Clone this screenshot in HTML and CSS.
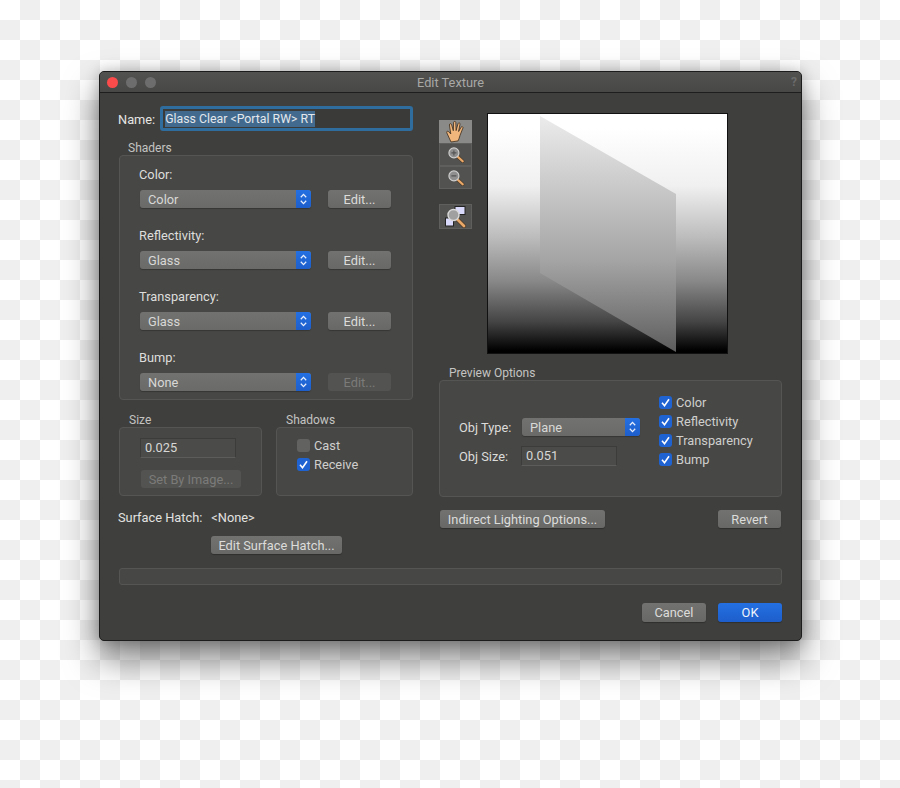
FILE: index.html
```html
<!DOCTYPE html>
<html lang="en">
<head>
  <meta charset="UTF-8" />
  <title>Edit Texture</title>
  <link rel="stylesheet" href="styles.css">
</head>
<body>
  <svg class="defs" width="0" height="0">
    <symbol id="updown" viewBox="0 0 15 18">
      <path d="M4.8 7.2 7.5 4.4l2.7 2.8M4.8 10.8l2.7 2.8 2.7-2.8" fill="none" stroke="#e8eefc" stroke-width="1.3"/>
    </symbol>
    <symbol id="tick" viewBox="0 0 13 13">
      <path d="M3 6.8 5.5 9.7 10 3.2" fill="none" stroke="#fff" stroke-width="1.6"/>
    </symbol>
    <symbol id="glass" viewBox="0 0 24 24">
      <path d="M13.500 13.500 20 19.500" stroke="#4a3a2a" stroke-width="4.200" stroke-linecap="round"/>
      <path d="M13.500 13.500 20 19.500" stroke="#e9a768" stroke-width="2.800" stroke-linecap="round"/>
      <circle cx="9.500" cy="9.500" r="6" fill="#8f8f8f" stroke="#cfcfcf" stroke-width="1.400"/>
    </symbol>
  </svg>

  <div class="window">
    <div class="titlebar">
      <div class="lights"><i class="red"></i><i></i><i></i></div>
      <div class="title">Edit Texture</div>
      <div class="help">?</div>
    </div>

    <div class="content">
      <div class="main">
        <div class="left">
          <div class="name-row">
            <span>Name:</span>
            <div class="name-input"><span class="selected">Glass Clear &lt;Portal RW&gt; RT</span></div>
          </div>

          <div class="legend">Shaders</div>
          <div class="group shaders">
            <div class="shader">
              <div class="shader-label">Color:</div>
              <div class="shader-row">
                <div class="select"><span>Color</span><b><svg width="15" height="18"><use href="#updown"/></svg></b></div>
                <div class="btn edit">Edit...</div>
              </div>
            </div>
            <div class="shader">
              <div class="shader-label">Reflectivity:</div>
              <div class="shader-row">
                <div class="select"><span>Glass</span><b><svg width="15" height="18"><use href="#updown"/></svg></b></div>
                <div class="btn edit">Edit...</div>
              </div>
            </div>
            <div class="shader">
              <div class="shader-label">Transparency:</div>
              <div class="shader-row">
                <div class="select"><span>Glass</span><b><svg width="15" height="18"><use href="#updown"/></svg></b></div>
                <div class="btn edit">Edit...</div>
              </div>
            </div>
            <div class="shader">
              <div class="shader-label">Bump:</div>
              <div class="shader-row">
                <div class="select"><span>None</span><b><svg width="15" height="18"><use href="#updown"/></svg></b></div>
                <div class="btn edit disabled">Edit...</div>
              </div>
            </div>
          </div>

          <div class="pair">
            <div class="size-col">
              <div class="legend">Size</div>
              <div class="group size-box">
                <div class="field size-field">0.025</div>
                <div class="btn disabled image-btn">Set By Image...</div>
              </div>
            </div>
            <div class="shadow-col">
              <div class="legend">Shadows</div>
              <div class="group shadow-box">
                <div class="check"><i class="off"></i>Cast</div>
                <div class="check"><i><svg width="13" height="13"><use href="#tick"/></svg></i>Receive</div>
              </div>
            </div>
          </div>

          <div class="hatch-row"><span>Surface Hatch:</span><span>&lt;None&gt;</span></div>
          <div class="btn hatch-btn">Edit Surface Hatch...</div>
        </div>

        <div class="right">
          <div class="preview-row">
            <div class="tools">
              <div class="tool active">
                <svg width="24" height="24" viewBox="0 0 24 24">
                  <path d="M7 22 2.800 12.800c-.6-1.400 1-2.200 1.900-1.100l2.100 2.300L5.400 5c-.2-1.500 1.800-1.800 2.200-.3l1.700 6L9.600 2.500c.1-1.500 2.100-1.500 2.200 0l.3 8.100 1.900-6.900c.4-1.400 2.300-1 2 .5l-1.400 7.300 2.500-4.300c.7-1.200 2.400-.4 1.800.9l-2.900 7.300c-.5 1.700-1 4-1.900 5.500z" fill="#f0b67c" stroke="#3c2c1c" stroke-width=".8"/>
                </svg>
              </div>
              <div class="tool">
                <svg width="20" height="20"><use href="#glass"/><path d="M5.400 7.900h5M7.900 5.400v5" stroke="#555" stroke-width="1.200"/></svg>
              </div>
              <div class="tool">
                <svg width="20" height="20"><use href="#glass"/><path d="M5.400 7.900h5" stroke="#555" stroke-width="1.200"/></svg>
              </div>
              <div class="tool fit">
                <svg width="24" height="24" viewBox="0 0 24 24">
                  <rect x="11" y="1.500" width="10" height="8" fill="#d9d9fb" stroke="#222"/>
                  <rect x="1.500" y="13" width="8" height="8" fill="#d9d9fb" stroke="#222"/>
                  <path d="M13 14 20 21" stroke="#4a3a2a" stroke-width="4.200" stroke-linecap="round"/>
                  <path d="M13 14 20 21" stroke="#e9a768" stroke-width="2.800" stroke-linecap="round"/>
                  <circle cx="9.500" cy="10" r="5.500" fill="#a0a0a0" stroke="#d8d8d8" stroke-width="1.400"/>
                </svg>
              </div>
            </div>
            <div class="preview">
              <svg width="239" height="239" viewBox="0 0 239 239">
                <defs>
                  <linearGradient id="plane" x1="0" y1="0" x2="0" y2="1">
                    <stop offset="0" stop-color="#ececec"/>
                    <stop offset=".61" stop-color="#a5a5a5"/>
                    <stop offset=".9" stop-color="#707070"/>
                    <stop offset="1" stop-color="#5c5c5c"/>
                  </linearGradient>
                </defs>
                <polygon points="52,2 188,80 188,238 52,159" fill="url(#plane)"/>
              </svg>
            </div>
          </div>

          <div class="legend options-legend">Preview Options</div>
          <div class="group options">
            <div class="obj">
              <div class="obj-row">
                <span class="obj-label">Obj Type:</span>
                <div class="select obj-select"><span>Plane</span><b><svg width="15" height="18"><use href="#updown"/></svg></b></div>
              </div>
              <div class="obj-row">
                <span class="obj-label">Obj Size:</span>
                <div class="field obj-field">0.051</div>
              </div>
            </div>
            <div class="checks">
              <div class="check"><i><svg width="13" height="13"><use href="#tick"/></svg></i>Color</div>
              <div class="check"><i><svg width="13" height="13"><use href="#tick"/></svg></i>Reflectivity</div>
              <div class="check"><i><svg width="13" height="13"><use href="#tick"/></svg></i>Transparency</div>
              <div class="check"><i><svg width="13" height="13"><use href="#tick"/></svg></i>Bump</div>
            </div>
          </div>

          <div class="right-btns">
            <div class="btn indirect">Indirect Lighting Options...</div>
            <div class="btn revert">Revert</div>
          </div>
        </div>
      </div>

      <div class="status"></div>

      <div class="footer">
        <div class="btn wide">Cancel</div>
        <div class="btn wide primary">OK</div>
      </div>
    </div>
  </div>
</body>
</html>
```

FILE: styles.css
```css
html, body {
  height: 100%;
}
body {
  margin: 0;
  padding: 71px 0 0 99px;
  box-sizing: border-box;
  overflow: hidden;
  font-family: Roboto, "Liberation Sans", sans-serif;
  font-size: 12.8px;
  color: #d8d8d6;
  background-color: #fff;
  background-image: conic-gradient(#efefef 25%, #fff 25% 50%, #efefef 50% 75%, #fff 75%);
  background-size: 40px 40px;
}
.defs {
  position: absolute;
}

.window {
  width: 703px;
  height: 570px;
  box-sizing: border-box;
  background: #3f3f3d;
  border: 1px solid #1c1c1c;
  border-radius: 5px;
  box-shadow: 0 18px 34px rgba(0,0,0,0.5), 0 0 14px rgba(0,0,0,0.22);
  overflow: hidden;
}

.titlebar {
  display: grid;
  grid-template-columns: 1fr auto 1fr;
  align-items: center;
  height: 20px;
  padding: 0 4px 0 7px;
  background: linear-gradient(#525250, #484846);
  border-bottom: 1px solid #1e1e1e;
}
.lights {
  display: flex;
  gap: 8px;
}
.lights i {
  width: 11px;
  height: 11px;
  border-radius: 50%;
  background: #6d6d6d;
}
.lights .red {
  background: #fb4b4b;
}
.title {
  color: #a8a8a6;
  font-size: 12.8px;
  margin-left: -3px;
}
.help {
  justify-self: end;
  color: #6b6b6b;
  font-weight: bold;
  font-size: 12px;
}

.content {
  padding: 13px 19px 0 18px;
}
.main {
  display: grid;
  grid-template-columns: 295px 343px;
  column-gap: 26px;
}

.legend {
  height: 14px;
  line-height: 15px;
  padding-left: 10px;
  font-size: 12px;
  color: #c4c4c2;
}
.group {
  box-sizing: border-box;
  background: #474745;
  border: 1px solid #555553;
  border-radius: 4px;
}

.name-row {
  display: flex;
  align-items: center;
  box-sizing: border-box;
  gap: 5px;
  height: 25px;
  margin-bottom: 10px;
  padding-top: 1px;
  color: #e6e6e4;
}
.name-input {
  box-sizing: border-box;
  width: 254px;
  height: 25px;
  margin-top: -1px;
  padding: 2px 2px;
  line-height: 16px;
  border: 3px solid #2f6d9e;
  border-radius: 3px;
  background: #3a3a38;
  font-size: 12.3px;
}
.selected {
  display: inline-block;
  background: #426a8e;
  color: #e4e8ec;
}

.shaders {
  margin-left: 1px;
  width: 294px;
  height: 245px;
  padding: 11px 0 0 19px;
}
.shader {
  height: 61px;
}
.shader-label {
  height: 23px;
  line-height: 16px;
  color: #dededc;
}
.shader-row {
  display: flex;
  gap: 17px;
  margin-left: 1px;
}

.select {
  display: flex;
  justify-content: space-between;
  align-items: center;
  box-sizing: border-box;
  width: 171px;
  height: 18px;
  padding-left: 8px;
  border-radius: 3px;
  overflow: hidden;
  background: linear-gradient(#727270, #6a6a68);
  box-shadow: 0 1px 1px rgba(0,0,0,0.25);
  color: #d8d8d6;
}
.select b {
  display: flex;
  width: 15px;
  height: 18px;
  background: linear-gradient(#2470e2, #1d5ecb);
}

.btn {
  display: flex;
  align-items: center;
  justify-content: center;
  height: 18px;
  border-radius: 3px;
  background: linear-gradient(#727270, #686866);
  box-shadow: 0 1px 1px rgba(0,0,0,0.25);
  color: #dcdcda;
}
.btn.disabled {
  background: #535351;
  color: #7b7b79;
  box-shadow: none;
}
.edit {
  width: 63px;
}

.pair {
  display: flex;
  gap: 14px;
  margin: 13px 0 0 1px;
}
.size-box {
  width: 143px;
  height: 69px;
  padding: 10px 0 0 20px;
}
.shadow-box {
  width: 137px;
  height: 69px;
  padding: 8px 0 0 20px;
}
.field {
  box-sizing: border-box;
  height: 20px;
  line-height: 18px;
  padding-left: 4px;
  background: #4b4b49;
  border: 1px solid #3c3c3a;
  border-bottom-color: #5c5c5a;
  color: #d8d8d6;
}
.size-field {
  width: 96px;
}
.image-btn {
  width: 100px;
  margin: 12px 0 0 1px;
}

.check {
  display: flex;
  align-items: center;
  gap: 4px;
  height: 19px;
  color: #cfcfcd;
}
.check i {
  display: flex;
  width: 13px;
  height: 13px;
  border-radius: 3px;
  background: #1f63d3;
}
.check i.off {
  background: #626260;
}

.hatch-row {
  display: flex;
  gap: 9px;
  height: 16px;
  line-height: 18px;
  margin-top: 13px;
  color: #e2e2e0;
}
.hatch-btn {
  width: 131px;
  margin: 11px 0 0 93px;
}

.preview-row {
  display: flex;
  gap: 15px;
  height: 241px;
  margin-top: 7px;
}
.tools {
  display: flex;
  flex-direction: column;
  width: 33px;
  padding-top: 7px;
}
.tool {
  display: flex;
  align-items: center;
  justify-content: center;
  height: 23px;
  background: #525250;
  border: 1px solid #5f5f5d;
  box-sizing: border-box;
}
.tool.active {
  background: #8a8a88;
  border-color: #8a8a88;
}
.tool.fit {
  height: 25px;
  margin-top: 15px;
}
.preview {
  box-sizing: border-box;
  width: 241px;
  height: 241px;
  border: 1px solid #111;
  background: linear-gradient(#fff 0%, #fff 6%, #f0f0f0 30%, #bbb 52%, #888 70%, #444 87%, #000 99%);
}
.preview svg {
  display: block;
}

.options-legend {
  margin-top: 12px;
  line-height: 15px;
}
.options {
  display: flex;
  width: 343px;
  height: 117px;
  padding: 12px 0 0 19px;
}
.obj {
  width: 200px;
  padding-top: 25px;
}
.obj-row {
  display: flex;
  align-items: center;
  min-height: 18px;
  margin-bottom: 10px;
  color: #dcdcda;
}
.obj-label {
  width: 63px;
}
.obj-select {
  width: 118px;
}
.obj-field {
  width: 96px;
  margin-left: -1px;
}
.right-btns {
  display: flex;
  justify-content: space-between;
  margin: 13px 1px 0 1px;
}
.indirect {
  width: 165px;
}
.revert {
  width: 63px;
}

.status {
  box-sizing: border-box;
  height: 17px;
  margin: 14px 0 0 1px;
  background: #474745;
  border: 1px solid #555553;
  border-radius: 3px;
}
.footer {
  display: flex;
  justify-content: flex-end;
  gap: 12px;
  margin-top: 18px;
}
.wide {
  width: 64px;
  height: 19px;
}
.btn.primary {
  background: linear-gradient(#2470e2, #1d5ecb);
  color: #f0f4fc;
}
```
